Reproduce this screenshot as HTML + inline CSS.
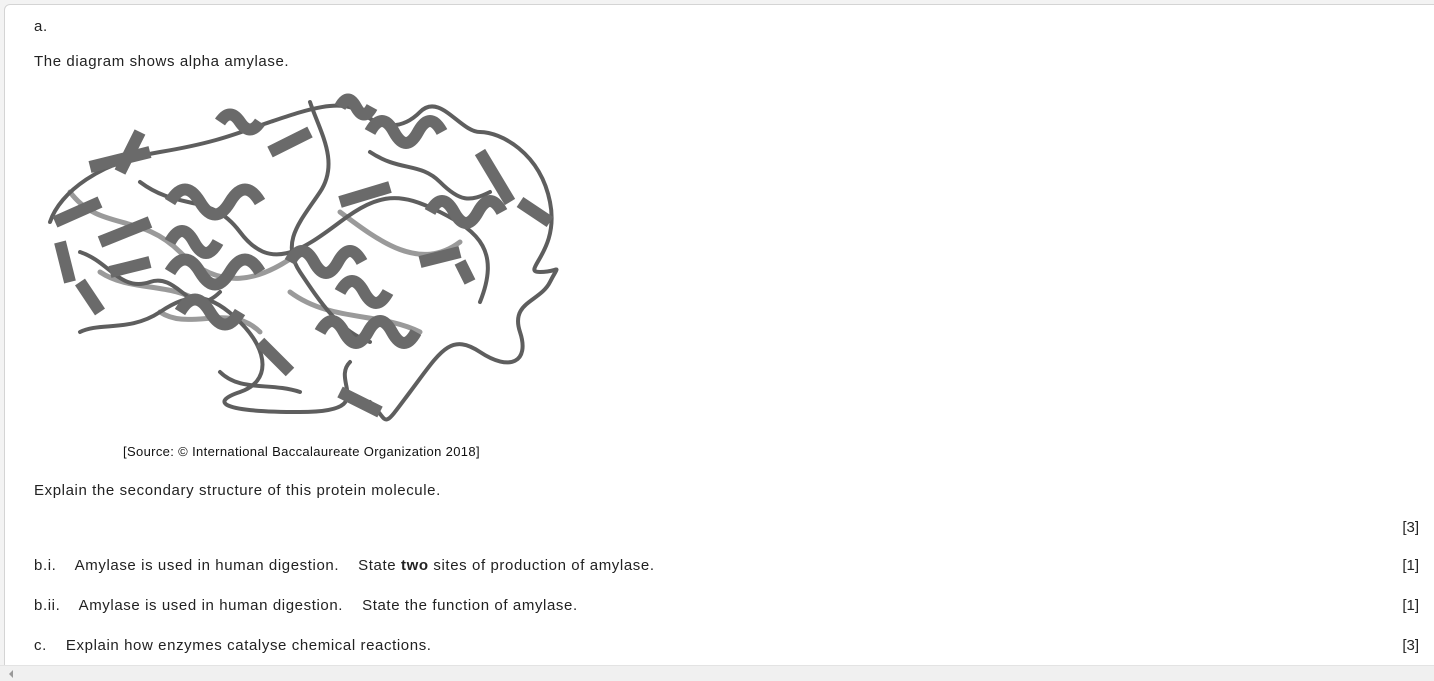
<!DOCTYPE html>
<html><head><meta charset="utf-8"><style>
html,body{margin:0;padding:0;background:#f3f3f3;width:1434px;height:681px;overflow:hidden;font-family:"Liberation Sans",sans-serif;position:relative;}
.box{position:absolute;left:4px;top:4px;width:1440px;height:676px;background:#fff;border:1px solid #d4d4d4;border-radius:6px;box-sizing:border-box;}
.t{position:absolute;font-size:15px;color:#222;white-space:nowrap;line-height:18px;letter-spacing:0.6px;}
.r{position:absolute;right:15px;font-size:15px;color:#222;line-height:18px;}
.cap{position:absolute;left:123px;top:444px;font-size:13px;color:#111;letter-spacing:0.35px;}
.sb{position:absolute;left:0;top:665px;width:1434px;height:16px;background:#f0f0f0;border-top:1px solid #e3e3e3;}
</style></head><body>
<div class="box"></div>
<div class="t" style="left:34px;top:18px">a.</div>
<div class="t" style="left:34px;top:53px">The diagram shows alpha amylase.</div>
<svg style="position:absolute;left:40px;top:92px" width="530" height="340" viewBox="0 0 530 340" fill="none" stroke-linecap="round">
<g stroke="#9a9a9a" stroke-width="5">
<path d="M30 100 C60 140 100 120 140 160 S220 190 260 160"/>
<path d="M300 120 C340 150 380 180 420 150"/>
<path d="M250 200 C290 230 340 220 380 240"/>
<path d="M120 220 C150 240 190 210 220 240"/>
<path d="M60 180 C90 200 130 190 160 210"/>
</g>
<g stroke="#5e5e5e" stroke-width="4">
<path d="M10 130 C20 100 60 70 120 60 S200 40 230 30 S300 5 320 20 S360 40 380 20 S420 40 440 40 S500 60 510 110 S480 180 500 180 S520 170 510 190 S470 210 480 240 S470 280 440 260 S400 260 370 300 S350 330 330 310"/>
<path d="M40 240 C60 230 90 240 120 220 S170 200 200 230 S230 290 200 300 S180 320 260 320 S290 290 310 270"/>
<path d="M270 10 C280 40 300 70 280 100 S240 150 260 180 S300 240 330 250"/>
<path d="M100 90 C140 120 170 100 200 140 S260 160 300 130 S360 100 400 120 S460 160 440 210"/>
<path d="M40 160 C70 170 80 200 110 190 S150 230 180 200"/>
<path d="M180 280 C200 300 230 290 260 300"/>
<path d="M330 60 C360 80 380 70 400 90 S430 110 450 100"/>
</g>
<g stroke="#6a6a6a" stroke-width="12" stroke-linecap="butt">
<path d="M50 75 L110 60"/><path d="M15 130 L60 110"/><path d="M60 150 L110 130"/><path d="M70 180 L110 170"/>
<path d="M20 150 L30 190"/><path d="M40 190 L60 220"/>
<path d="M130 110 q15 -25 30 0 q15 25 30 0 q15 -25 30 0"/>
<path d="M130 180 q15 -25 30 0 q15 25 30 0 q15 -25 30 0"/>
<path d="M140 220 q15 -25 30 0 q15 25 30 0"/>
<path d="M250 170 q12 -22 24 0 q12 22 24 0 q12 -22 24 0"/>
<path d="M280 240 q12 -22 24 0 q12 22 24 0 q12 -22 24 0 q12 22 24 0"/>
<path d="M330 40 q12 -22 24 0 q12 22 24 0 q12 -22 24 0"/>
<path d="M390 120 q12 -22 24 0 q12 22 24 0 q12 -22 24 0"/>
<path d="M130 150 q12 -22 24 0 q12 22 24 0"/>
<path d="M300 200 q12 -22 24 0 q12 22 24 0"/>
<path d="M440 60 L470 110"/><path d="M480 110 L510 130"/>
<path d="M230 60 L270 40"/><path d="M300 110 L350 95"/>
<path d="M220 250 L250 280"/><path d="M300 300 L340 320"/>
<path d="M180 30 q10 -15 20 0 q10 15 20 0"/>
<path d="M300 15 q8 -15 16 0 q8 15 16 0"/>
<path d="M100 40 L80 80"/><path d="M380 170 L420 160"/>
<path d="M420 170 L430 190"/>
</g>
</svg>
<div class="cap">[Source: © International Baccalaureate Organization 2018]</div>
<div class="t" style="left:34px;top:482px">Explain the secondary structure of this protein molecule.</div>
<div class="r" style="top:519px">[3]</div>
<div class="t" style="left:34px;top:557px">b.i.&nbsp;&nbsp;&nbsp; Amylase is used in human digestion.&nbsp;&nbsp;&nbsp; State <b>two</b> sites of production of amylase.</div>
<div class="r" style="top:557px">[1]</div>
<div class="t" style="left:34px;top:597px">b.ii.&nbsp;&nbsp;&nbsp; Amylase is used in human digestion.&nbsp;&nbsp;&nbsp; State the function of amylase.</div>
<div class="r" style="top:597px">[1]</div>
<div class="t" style="left:34px;top:637px">c.&nbsp;&nbsp;&nbsp; Explain how enzymes catalyse chemical reactions.</div>
<div class="r" style="top:637px">[3]</div>
<div class="sb"><div style="position:absolute;left:9px;top:4px;width:0;height:0;border-top:4px solid transparent;border-bottom:4px solid transparent;border-right:4px solid #999"></div></div>
</body></html>
